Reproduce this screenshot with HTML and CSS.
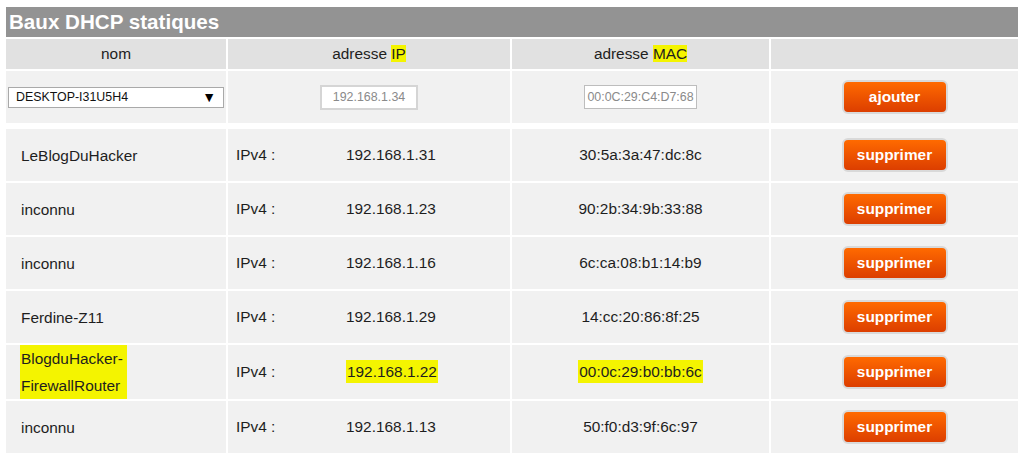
FILE: index.html
```html
<!DOCTYPE html>
<html lang="fr">
<head>
    <meta charset="UTF-8">
    <title>Baux DHCP statiques</title>
    <link rel="stylesheet" href="styles.css">
</head>
<body>

<div class="dhcp">
    <div class="dhcp_title">Baux DHCP statiques</div>

    <!--ligne d'entete + ligne d'ajout-->
    <table class="dhcp_table">
        <colgroup>
            <col class="c_nom"><col class="c_ip"><col class="c_mac"><col class="c_action">
        </colgroup>
        <tr class="row_head">
            <td>nom</td>
            <td>adresse <span class="mark">IP</span></td>
            <td>adresse <span class="mark">MAC</span></td>
            <td></td>
        </tr>
        <tr class="row_add">
            <td class="cell_select">
                <span class="select_wrap">
                    <select class="select_host">
                        <option>DESKTOP-I31U5H4</option>
                    </select>
                    <span class="select_arrow">&#9660;</span>
                </span>
            </td>
            <td class="center"><input class="field field_ip" type="text" value="192.168.1.34"></td>
            <td class="center"><input class="field field_mac" type="text" value="00:0C:29:C4:D7:68"></td>
            <td class="center"><button class="btn">ajouter</button></td>
        </tr>
    </table>

    <!--baux existants-->
    <table class="dhcp_table dhcp_list">
        <colgroup>
            <col class="c_nom"><col class="c_ip"><col class="c_mac"><col class="c_action">
        </colgroup>
        <tr>
            <td class="name">LeBlogDuHacker</td>
            <td class="ip"><span class="proto">IPv4 :</span>192.168.1.31</td>
            <td class="center">30:5a:3a:47:dc:8c</td>
            <td class="center"><button class="btn">supprimer</button></td>
        </tr>
        <tr>
            <td class="name">inconnu</td>
            <td class="ip"><span class="proto">IPv4 :</span>192.168.1.23</td>
            <td class="center">90:2b:34:9b:33:88</td>
            <td class="center"><button class="btn">supprimer</button></td>
        </tr>
        <tr>
            <td class="name">inconnu</td>
            <td class="ip"><span class="proto">IPv4 :</span>192.168.1.16</td>
            <td class="center">6c:ca:08:b1:14:b9</td>
            <td class="center"><button class="btn">supprimer</button></td>
        </tr>
        <tr>
            <td class="name">Ferdine-Z11</td>
            <td class="ip"><span class="proto">IPv4 :</span>192.168.1.29</td>
            <td class="center">14:cc:20:86:8f:25</td>
            <td class="center"><button class="btn">supprimer</button></td>
        </tr>
        <tr class="row_tall">
            <td class="name"><span class="mark mark_name">BlogduHacker-<br>FirewallRouter</span></td>
            <td class="ip"><span class="proto">IPv4 :</span><span class="mark mark_val">192.168.1.22</span></td>
            <td class="center"><span class="mark mark_val">00:0c:29:b0:bb:6c</span></td>
            <td class="center"><button class="btn">supprimer</button></td>
        </tr>
        <tr>
            <td class="name">inconnu</td>
            <td class="ip"><span class="proto">IPv4 :</span>192.168.1.13</td>
            <td class="center">50:f0:d3:9f:6c:97</td>
            <td class="center"><button class="btn">supprimer</button></td>
        </tr>
    </table>
</div>

</body>
</html>
```

FILE: styles.css
```css
 body{
     margin: 0;
     background: #fff;
     font-family: "Liberation Sans", Arial, sans-serif;
     color: #1e1e1e;
 }

 /*bloc principal*/
 .dhcp{
     width: 1012px;
     padding: 7px 0 0 6px;
 }
 .dhcp_title{
     height: 30px;
     line-height: 30px;
     padding-left: 3px;
     background: #939393;
     color: #fff;
     font-size: 20.6px;
     font-weight: bold;
 }

 /*tableaux*/
 .dhcp_table{
     width: 1016px;
     margin: 0 -2px;
     border-collapse: separate;
     border-spacing: 2px;
     table-layout: fixed;
     font-size: 15.4px;
 }
 .dhcp_table td{
     padding: 0;
     background: #f1f1f1;
     vertical-align: middle;
 }
 .c_nom{ width: 220px; }
 .c_ip{ width: 282px; }
 .c_mac{ width: 257px; }
 .c_action{ width: 247px; }

 .center{
     text-align: center;
 }

 /*entete*/
 .row_head{
     height: 30px;
 }
 .row_head td{
     background: #e1e1e1;
     text-align: center;
 }

 /*ligne d'ajout*/
 .row_add{
     height: 52px;
 }
 .cell_select{
     padding-left: 2px !important;
 }
 .select_wrap{
     position: relative;
     display: inline-block;
     vertical-align: middle;
 }
 .select_host{
     -webkit-appearance: none;
     appearance: none;
     width: 216px;
     height: 21px;
     margin: 0;
     padding: 0 0 0 7px;
     border: 1px solid #a9a9a9;
     border-radius: 0;
     background: #fff;
     font-family: "Liberation Sans", Arial, sans-serif;
     font-size: 12.4px;
     color: #111;
 }
 .select_arrow{
     position: absolute;
     right: 8px;
     top: 2px;
     font-size: 14px;
     line-height: 16px;
     color: #000;
     pointer-events: none;
 }
 .field{
     box-sizing: border-box;
     height: 25px;
     margin: 0;
     padding: 0 2px;
     border: 2px solid #d5d5d5;
     background: #fff;
     font-family: "Liberation Sans", Arial, sans-serif;
     font-size: 12.4px;
     color: #8a8a8a;
     text-align: center;
     vertical-align: middle;
 }
 .field_ip{
     width: 98px;
 }
 .field_mac{
     width: 113px;
     height: 24px;
     border-width: 1px;
     border-color: #bdbdbd;
     padding: 0;
 }

 /*liste*/
 .dhcp_list{
     margin-top: 2px;
 }
 .dhcp_list tr{
     height: 52px;
 }
 .dhcp_list .row_tall{
     height: 54px;
 }
 .name{
     padding-left: 15px !important;
     line-height: 27px;
 }
 .ip{
     padding-left: 8px !important;
 }
 .proto{
     display: inline-block;
     width: 110px;
 }

 /*surligneur jaune*/
 .mark{
     background: #f4f400;
 }
 .mark_val{
     padding: 3px 1px;
 }
 .mark_name{
     display: inline-block;
     padding: 0 4px 0 1px;
     margin-left: -1px;
     vertical-align: middle;
 }

 /*boutons*/
 .btn{
     width: 106px;
     height: 34px;
     padding: 0;
     border: 2px solid #d9d9d9;
     border-radius: 6px;
     background: linear-gradient(#ff6a00, #dc3e00);
     color: #fff;
     font-family: "Liberation Sans", Arial, sans-serif;
     font-size: 15.4px;
     font-weight: bold;
     vertical-align: middle;
 }
```
